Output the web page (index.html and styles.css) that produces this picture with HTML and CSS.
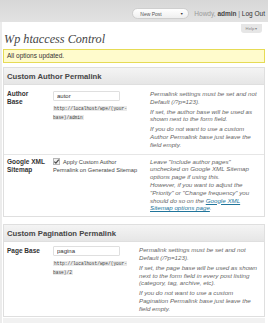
FILE: index.html
```html
<!DOCTYPE html>
<html>
<head>
<meta charset="utf-8">
<link rel="stylesheet" href="styles.css">
</head>
<body>
<div class="adminbar">
  <div class="fav"><span class="fav-label">New Post</span><span class="fav-toggle">&#9660;</span></div>
  <div class="user"><span class="howdy">Howdy,</span> <a class="uname">admin</a> <span class="sep">|</span> <a class="logout">Log Out</a></div>
</div>
<div class="wrap">
  <div class="meta"><span class="help">Help &#9662;</span></div>
  <h2 class="title">Wp htaccess Control</h2>
  <div class="notice">All options updated.</div>

  <div class="postbox">
    <h3 class="box-title">Custom Author Permalink</h3>
    <div class="row row-author">
      <div class="label">Author<br>Base</div>
      <div class="field">
        <input class="text" type="text" value="autor">
        <p class="url"><code>http://localhost/wpe/(your-base)/admin</code></p>
      </div>
      <div class="desc">
        <p>Permalink settings must be set and not<br>Default (/?p=123).</p>
        <p>If set, the author base will be used as<br>shown next to the form field.</p>
        <p>If you do not want to use a custom<br>Author Permalink base just leave the<br>field empty.</p>
      </div>
    </div>
    <div class="row row-sitemap">
      <div class="label">Google XML<br>Sitemap</div>
      <div class="field">
        <label class="check-label"><span class="check"><svg viewBox="0 0 7 7" width="7" height="7"><path d="M1.3 3.6 L2.9 5.2 L5.8 1.6" fill="none" stroke="#4a4a4a" stroke-width="1.2"/></svg></span>Apply Custom Author Permalink on Generated Sitemap</label>
      </div>
      <div class="desc">
        <p>Leave "Include author pages"<br>unchecked on Google XML Sitemap<br>options page if using this.<br>However, if you want to adjust the<br>"Priority" or "Change frequency" you<br>should do so on the <a class="link">Google XML<br>Sitemap options page</a>.</p>
      </div>
    </div>
  </div>

  <div class="postbox">
    <h3 class="box-title">Custom Pagination Permalink</h3>
    <div class="row row-page">
      <div class="label label-single">Page Base</div>
      <div class="field">
        <input class="text" type="text" value="pagina">
        <p class="url"><code>http://localhost/wpe/(your-base)/2</code></p>
      </div>
      <div class="desc">
        <p>Permalink settings must be set and not<br>Default (/?p=123).</p>
        <p>If set, the page base will be used as shown<br>next to the form field in every post listing<br>(category, tag, archive, etc).</p>
        <p>If you do not want to use a custom<br>Pagination Permalink base just leave the<br>field empty.</p>
      </div>
    </div>
  </div>
  <div class="nextbox"></div>
</div>
</body>
</html>
```

FILE: styles.css
```css
* { box-sizing: border-box; }
html, body { margin: 0; padding: 0; }
body {
  background: #fff;
  font-family: "Liberation Sans", Arial, sans-serif;
  color: #333;
  width: 268px;
  height: 323px;
  overflow: hidden;
}
.adminbar {
  height: 22px;
  background: linear-gradient(#d7d7d7, #e2e2e2);
  display: flex;
  justify-content: flex-end;
  align-items: center;
  padding: 5px 3px 0 0;
  gap: 5px;
}
.fav {
  width: 57px;
  height: 11px;
  border: 1px solid #cfcfcf;
  border-radius: 6px;
  background: linear-gradient(#ffffff, #efefef);
  display: flex;
  align-items: center;
  justify-content: space-between;
  padding: 0 5px 0 7px;
  font-size: 5px;
  color: #555;
}
.fav-toggle { font-size: 3.5px; color: #333; }
.user { font-size: 6.5px; color: #999; white-space: nowrap; }
.user .uname { color: #464646; font-weight: bold; }
.user .sep { color: #777; }
.user .logout { color: #333; }
.wrap {
  border-left: 2px solid #ececec;
  padding: 0 3px 0 1px;
}
.meta {
  display: flex;
  justify-content: flex-end;
  padding-right: 3px;
  padding-top: 2px;
}
.help {
  display: block;
  width: 21px;
  height: 9px;
  background: #e6e6e6;
  border-radius: 0 0 3px 3px;
  font-size: 4.2px;
  line-height: 9px;
  text-align: center;
  color: #888;
}
.title {
  margin: 0;
  padding-left: 1px;
  font-family: "Liberation Serif", Georgia, serif;
  font-style: italic;
  font-weight: normal;
  font-size: 12.2px;
  line-height: 12px;
  color: #464646;
}
.notice {
  margin-top: 4px;
  background: #fffbcc;
  border: 1px solid #e6db55;
  height: 14px;
  padding-left: 3px;
  font-size: 6.5px;
  line-height: 12px;
  color: #333;
}
.postbox {
  margin-top: 4px;
  border: 1px solid #dfdfdf;
  background: #fff;
}
.postbox + .postbox { margin-top: 7px; }
.box-title {
  margin: 0;
  height: 17px;
  border-bottom: 1px solid #dfdfdf;
  background: linear-gradient(#f4f4f4, #e6e6e6);
  padding-left: 3px;
  font-size: 7.7px;
  line-height: 17px;
  font-weight: bold;
  color: #464646;
}
.row {
  display: grid;
  padding: 5px 0 5px 3px;
}
.row-author { grid-template-columns: 46px 87px 1fr; border-bottom: 1px solid #e6e6e6; }
.row-sitemap { grid-template-columns: 46px 87px 1fr; padding: 3px 0 4px 3px; }
.row-page { grid-template-columns: 46px 76px 1fr; padding: 4px 0 3px 3px; }
.label {
  font-size: 6.5px;
  line-height: 8px;
  font-weight: bold;
  color: #333;
}
.label-single { padding-top: 1px; }
.text {
  display: block;
  width: 67px;
  height: 10px;
  margin: 1px 0 0;
  padding: 0 3px;
  border: 1px solid #dfdfdf;
  border-radius: 1px;
  background: #fff;
  font-family: "Liberation Sans", Arial, sans-serif;
  font-size: 6px;
  color: #333;
  outline: none;
}
.row-page .text { margin-top: 0; }
.url {
  margin: 3px 0 0;
  font-size: 4.5px;
  line-height: 9px;
}
.url code {
  font-family: "Liberation Mono", "Courier New", monospace;
  background: #eaeaea;
  color: #444;
  padding: 0 1px;
}
.check-label {
  display: block;
  font-size: 5.7px;
  line-height: 8.5px;
  color: #444;
}
.check {
  display: inline-block;
  width: 7px;
  height: 7px;
  margin: 0 3px 0 0;
  border: 1px solid #b5b5b5;
  background: #f0f0f0;
  vertical-align: -1px;
}
.check svg { display: block; margin: -1px 0 0 -1px; }
.desc {
  padding-left: 10px;
  font-size: 6.2px;
  line-height: 7.8px;
  font-style: italic;
  color: #666;
  white-space: nowrap;
}
.desc p { margin: 0 0 2px; }
.desc p:last-child { margin-bottom: 0; }
.link { color: #21759b; text-decoration: underline; }
.nextbox {
  margin-top: 1px;
  height: 12px;
  background: #f1f1f1;
}
```
